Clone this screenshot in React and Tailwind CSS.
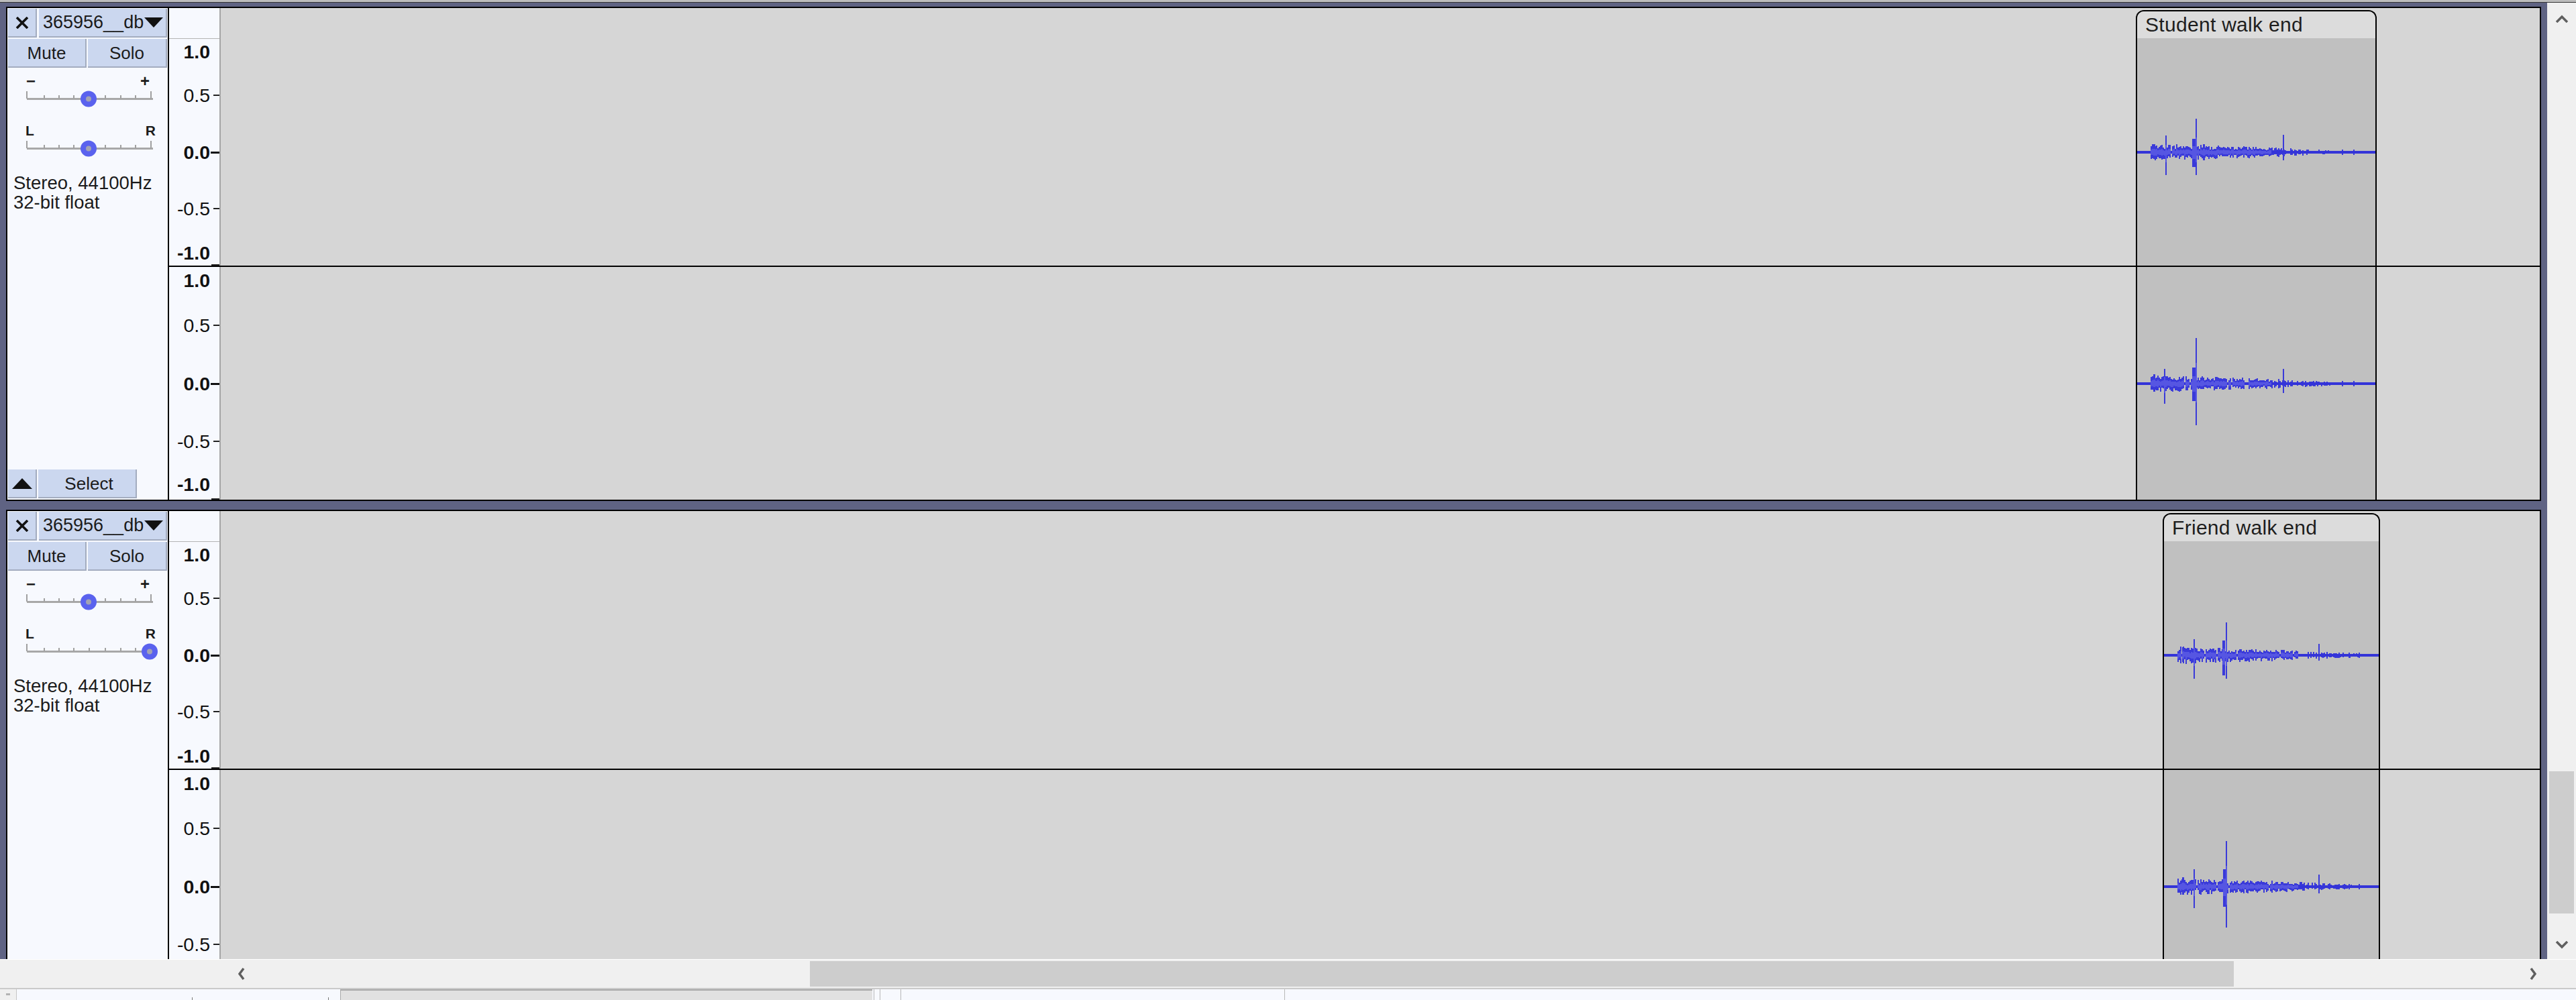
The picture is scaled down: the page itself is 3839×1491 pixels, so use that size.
import React from 'react';

// deterministic noise so the clip waveforms look the same on every render
function rng(seed) {
  let a = seed;
  return () => {
    a = (a + 0x6d2b79f5) | 0;
    let t = Math.imul(a ^ (a >>> 15), 1 | a);
    t = (t + Math.imul(t ^ (t >>> 7), 61 | t)) ^ t;
    return ((t ^ (t >>> 14)) >>> 0) / 4294967296;
  };
}

function makeBars(seed, spikes) {
  const r = rng(seed);
  const bars = [];
  for (let x = 20; x < 290; x += 2) {
    const base = x < 200 ? 13 - (x - 20) * 0.03 : 7.5 - (x - 200) * 0.05;
    const skip = x < 200 ? 0.06 : 0.4;
    const a = r();
    const b = r();
    const c = r();
    if (a < skip) continue;
    bars.push({ x, up: base * (0.4 + 0.6 * b), dn: base * (0.4 + 0.6 * c), w: 2 });
  }
  return bars.concat(spikes.map(([x, up, dn, w = 2]) => ({ x, up, dn, w })));
}

function Wave({ width, seed, spikes }) {
  const bars = makeBars(seed, spikes);
  return (
    <svg width={width} height={160} className="block" shapeRendering="crispEdges">
      {bars.map((b, i) => (
        <rect key={i} x={b.x} y={80 - b.up} width={b.w} height={b.up + b.dn} fill="#3a3ad9" />
      ))}
      <rect x={0} y={78} width={width} height={4} fill="#3434d8" />
      {bars
        .filter((b) => b.x < 200)
        .map((b, i) => (
          <rect key={'m' + i} x={b.x} y={80 - b.up * 0.45} width={b.w} height={(b.up + b.dn) * 0.45} fill="#5656e2" />
        ))}
    </svg>
  );
}

function Slider({ at }) {
  const ticks = [29, 55, 77, 99, 122, 146, 169, 191, 214];
  return (
    <svg width={239} height={30} className="block">
      <rect x={29} y={13} width={188} height={3} fill="#a8a8a8" />
      {ticks.map((x, i) => (
        <rect
          key={x}
          x={x - 1}
          y={i === 0 || i === ticks.length - 1 ? 3 : 9}
          width={2}
          height={i === 0 || i === ticks.length - 1 ? 11 : 5}
          fill="#a0a0a0"
        />
      ))}
      <circle cx={at} cy={14.5} r={12} fill="#5a62ee" />
      <circle cx={at} cy={14.5} r={4} fill="#a2a2b4" />
    </svg>
  );
}

function Btn({ className, children }) {
  return (
    <div
      className={
        'h-[43px] bg-[#cbd7ef] border-r-2 border-b-2 border-[#a3acbf] flex items-center ' + className
      }
    >
      {children}
    </div>
  );
}

function Panel({ pan, select }) {
  return (
    <div className="w-[239px] shrink-0 bg-[#f7f9fe] flex flex-col text-[26px] leading-none text-[#1b1b1b]">
      <div className="flex mt-px ml-px">
        <Btn className="w-[43px] justify-center">
          <svg width={20} height={18} viewBox="0 0 20 18">
            <path d="M2 1 L18 17 M18 1 L2 17" stroke="#111" strokeWidth={3.6} />
          </svg>
        </Btn>
        <Btn className="w-[191px] ml-[3px] pl-[6px] justify-between pr-[4px]">
          <span className="text-[27px]">365956__db</span>
          <svg width={28} height={15} viewBox="0 0 28 15">
            <path d="M0 0 H28 L14 15 Z" fill="#111" />
          </svg>
        </Btn>
      </div>
      <div className="flex mt-[2px] ml-px">
        <Btn className="w-[117px] justify-center">Mute</Btn>
        <Btn className="w-[118px] ml-[2px] justify-center">Solo</Btn>
      </div>
      <div className="mt-[8px] h-[24px] flex justify-between pl-[28px] pr-[27px] font-bold text-[24px] leading-[24px]">
        <span>−</span>
        <span>+</span>
      </div>
      <Slider at={121} />
      <div className="mt-[20px] h-[24px] flex justify-between pl-[27px] pr-[18px] font-bold text-[21px] leading-[24px]">
        <span>L</span>
        <span>R</span>
      </div>
      <Slider at={pan} />
      <div className="mt-[21px] pl-[9px] text-[27.5px] leading-[29px]">
        <div>Stereo, 44100Hz</div>
        <div>32-bit float</div>
      </div>
      {select && (
        <div className="mt-auto mb-[2px] ml-px flex">
          <Btn className="w-[43px] justify-center">
            <svg width={30} height={16} viewBox="0 0 30 16">
              <path d="M0 16 H30 L15 0 Z" fill="#111" />
            </svg>
          </Btn>
          <Btn className="w-[147px] ml-[2px] justify-center pl-[6px]">Select</Btn>
        </div>
      )}
    </div>
  );
}

function Ruler({ top, height, bottomLift, hideLast }) {
  const y = (v) => top + ((1 - v) / 2) * (height - top);
  const labels = [
    { v: 1, t: '1.0', bold: true, off: 5 },
    { v: 0.5, t: '0.5', off: -15 },
    { v: 0, t: '0.0', bold: true, off: -15 },
    { v: -0.5, t: '-0.5', off: -15 },
    { v: -1, t: '-1.0', bold: true, off: -bottomLift },
  ].filter((l) => !(hideLast && l.v === -1));
  return (
    <div className="w-[77px] shrink-0 border-r-2 border-[#a6a6a6] bg-[#f7f9fe] relative text-[28.5px] leading-[30px] text-[#111]">
      {top > 0 && <div className="absolute left-0 right-0 h-px bg-[#b4b4b4]" style={{ top: y(1) }} />}
      {labels.map((l) => (
        <span
          key={l.t}
          className={'absolute right-[14px] ' + (l.bold ? 'font-bold' : '')}
          style={{ top: y(l.v) + l.off }}
        >
          {l.t}
        </span>
      ))}
      <div className="absolute right-0 w-[9px] h-[2px] bg-[#222]" style={{ top: y(0.5) - 1 }} />
      <div className="absolute right-0 w-[13px] h-[3px] bg-[#111]" style={{ top: y(0) - 1 }} />
      <div className="absolute right-0 w-[9px] h-[2px] bg-[#222]" style={{ top: y(-0.5) - 1 }} />
      <div className="absolute right-0 bottom-0 w-[12px] h-[2px] bg-[#222]" />
    </div>
  );
}

function ClipHead({ pos, width, title, seed, spikes }) {
  return (
    <div
      className={
        'absolute top-[3px] bottom-0 border-2 border-b-0 border-black rounded-t-[12px] bg-[#c0c0c0] overflow-hidden ' +
        pos
      }
    >
      <div className="h-[40px] bg-[#dcdcdc] pl-[12px] text-[30px] tracking-[0.3px] leading-[40px] text-[#1e1e1e] whitespace-nowrap">
        {title}
      </div>
      <div className="absolute left-0 top-[130px]">
        <Wave width={width - 4} seed={seed} spikes={spikes} />
      </div>
    </div>
  );
}

function ClipBody({ pos, width, seed, spikes }) {
  return (
    <div className={'absolute top-0 bottom-0 border-x-2 border-black bg-[#c0c0c0] overflow-hidden ' + pos}>
      <div className="absolute left-0 top-[94px]">
        <Wave width={width - 4} seed={seed} spikes={spikes} />
      </div>
    </div>
  );
}

function Track({ pan, select, clip, last }) {
  return (
    <div className="shrink-0 h-[737px] border-2 border-black flex">
      <Panel pan={pan} select={select} />
      <div className="w-[2px] shrink-0 bg-black" />
      <div className="flex-1 flex flex-col">
        <div className="h-[384px] flex">
          <Ruler top={45} height={384} bottomLift={34} />
          <div className="flex-1 bg-[#d6d6d6] relative overflow-hidden">
            <ClipHead
              pos={clip.pos}
              width={clip.width}
              title={clip.title}
              seed={clip.seed}
              spikes={clip.spikes1}
            />
          </div>
        </div>
        <div className="h-[2px] bg-black" />
        <div className="h-[347px] flex">
          <Ruler top={0} height={347} bottomLift={38} hideLast={last} />
          <div className="flex-1 bg-[#d6d6d6] relative overflow-hidden">
            <ClipBody pos={clip.pos} width={clip.width} seed={clip.seed + 7} spikes={clip.spikes2} />
          </div>
        </div>
      </div>
    </div>
  );
}

const clips = [
  {
    pos: 'left-[2854px] w-[359px]',
    width: 359,
    title: 'Student walk end',
    seed: 11,
    spikes1: [[24, 12, 10, 3], [42, 25, 34], [82, 20, 22, 5], [87, 50, 34], [98, 12, 12, 3], [217, 26, 12], [305, 4, 4], [322, 4, 4]],
    spikes2: [[24, 14, 12, 3], [40, 22, 30], [82, 24, 26, 5], [87, 68, 62], [217, 22, 14], [305, 4, 4], [322, 4, 4]],
  },
  {
    pos: 'left-[2894px] w-[324px]',
    width: 324,
    title: 'Friend walk end',
    seed: 23,
    spikes1: [[27, 12, 10, 3], [44, 24, 35], [72, 10, 10, 3], [87, 22, 30, 4], [92, 49, 35], [230, 17, 8], [260, 4, 4], [275, 4, 4], [290, 4, 4]],
    spikes2: [[27, 14, 12, 3], [44, 26, 32], [88, 26, 30, 4], [92, 68, 61], [230, 18, 10], [260, 4, 4], [275, 4, 4], [290, 4, 4]],
  },
];

function Chevron({ d, w, h }) {
  return (
    <svg width={w} height={h} viewBox={`0 0 ${w} ${h}`}>
      <path d={d} fill="none" stroke="#5f5f5f" strokeWidth={3.5} strokeLinejoin="miter" />
    </svg>
  );
}

export default function App() {
  return (
    <div className="w-[3839px] h-[1491px] overflow-hidden flex flex-col bg-[#f0f0f0] font-['Liberation_Sans',Arial,sans-serif]">
      <div className="h-[3px] bg-[#bdbdbd]" />
      <div className="h-px bg-[#333]" />
      <div className="h-[1426px] flex">
        <div className="w-[3796px] bg-[#5f6383] pt-[6px] px-[9px] overflow-hidden flex flex-col gap-[13px]">
          <Track pan={121} select clip={clips[0]} />
          <Track pan={212} clip={clips[1]} last />
        </div>
        <div className="w-[43px] flex flex-col bg-[#f0f0f0]">
          <div className="h-[48px] flex items-center justify-center">
            <Chevron w={20} h={12} d="M2 11 L10 3 L18 11" />
          </div>
          <div className="h-[1098px]" />
          <div className="h-[212px] mx-[3px] bg-[#cdcdcd]" />
          <div className="flex-1" />
          <div className="h-[43px] flex items-center justify-center">
            <Chevron w={20} h={12} d="M2 1 L10 9 L18 1" />
          </div>
        </div>
      </div>
      <div className="h-[43px] flex border-t border-white bg-[#f0f0f0]">
        <div className="w-[339px]" />
        <div className="w-[42px] flex items-center justify-center">
          <Chevron w={10} h={18} d="M8 1 L2 9 L8 17" />
        </div>
        <div className="w-[826px]" />
        <div className="w-[2122px] my-[2px] bg-[#cdcdcd]" />
        <div className="flex-1" />
        <div className="w-[43px] flex items-center justify-center">
          <Chevron w={10} h={18} d="M2 1 L8 9 L2 17" />
        </div>
        <div className="w-[43px]" />
      </div>
      <div className="flex-1 flex border-t-2 border-[#cacaca] bg-[#f7f9fe]">
        <div className="w-[25px] bg-[#f0f0f0] border-r border-[#c6c6c6] flex justify-center">
          <div className="mt-[6px] w-[6px] h-[3px] bg-[#b3b3b3]" />
        </div>
        <div className="w-[482px] flex items-end">
          <div className="ml-[261px] w-px h-[4px] bg-[#777]" />
          <div className="ml-[202px] w-px h-[4px] bg-[#777]" />
        </div>
        <div className="w-[793px] bg-[#e1e1e1] border-t-2 border-l border-[#a9a9a9]" />
        <div className="w-[45px] flex">
          <div className="ml-[2px] w-px bg-[#b8b8b8]" />
          <div className="ml-[8px] w-px bg-[#b8b8b8]" />
          <div className="ml-[30px] w-px bg-[#b8b8b8]" />
        </div>
        <div className="w-[570px] border-r border-[#b8b8b8]" />
        <div className="flex-1" />
      </div>
    </div>
  );
}
